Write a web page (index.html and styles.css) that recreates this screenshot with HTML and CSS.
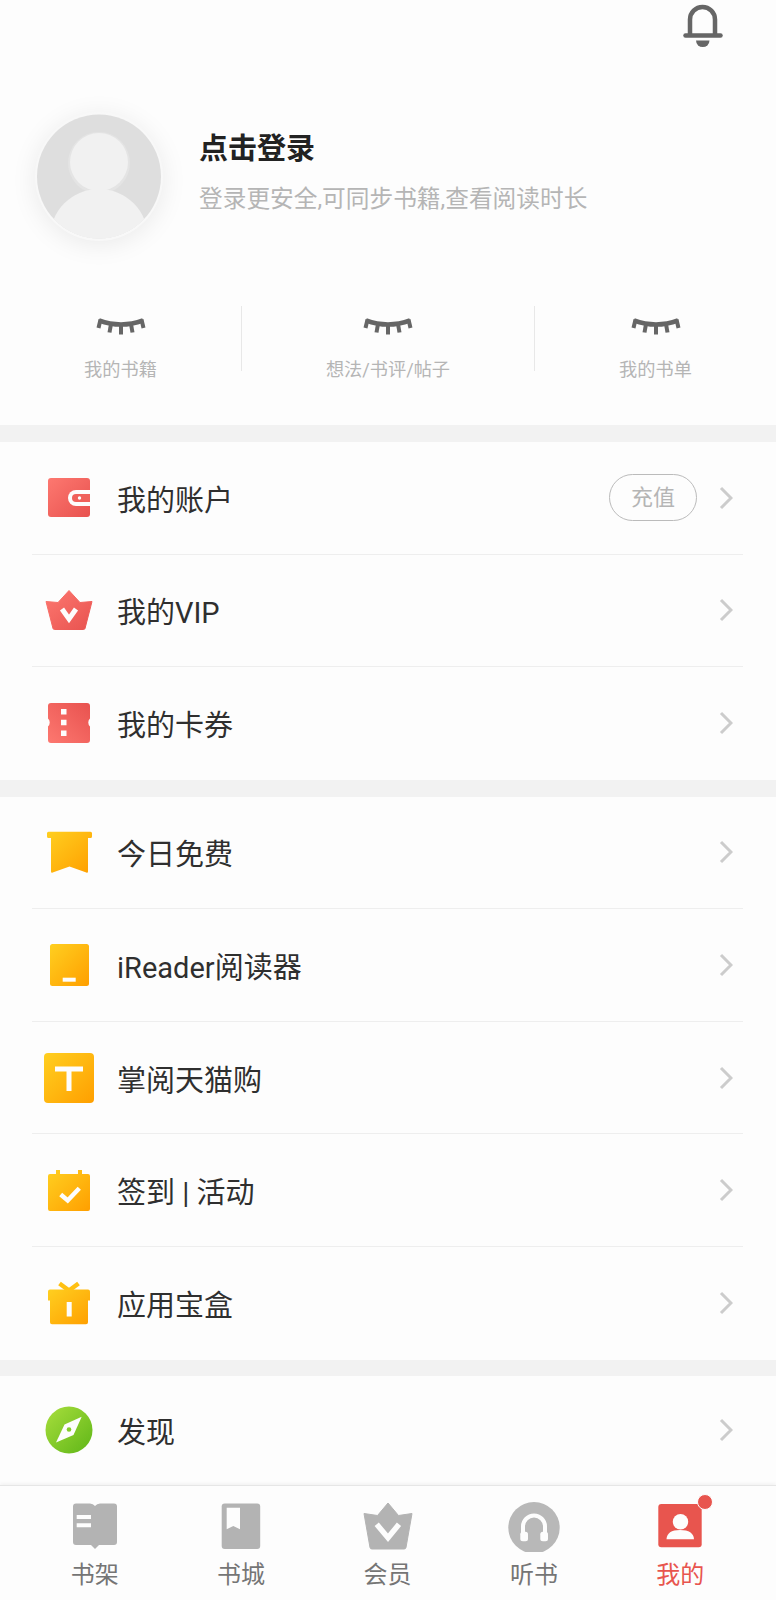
FILE: index.html
```html
<!DOCTYPE html>
<html lang="zh-CN">
<head>
    <meta charset="UTF-8">
    <meta name="viewport" content="width=device-width, initial-scale=1.0">
    <title>我的</title>
    <link rel="stylesheet" href="styles.css">
</head>
<body>
    <div class="page">
        <main class="content">
            <header class="head">
                <div class="topbar">
                    <svg class="bell" width="40" height="44" viewBox="0 0 40 44">
                        <path d="M7 31V15.500a12.500 12.500 0 0 1 25 0V31" fill="none" stroke="#666" stroke-width="4.500"/>
                        <path d="M2.500 31.500H37.500" stroke="#666" stroke-width="4.500" stroke-linecap="round"/>
                        <path d="M13 36.500H26.500a6.700 6.500 0 0 1-13.500 0z" fill="#666"/>
                    </svg>
                </div>
                <div class="profile">
                    <div class="avatar">
                        <svg width="124" height="125" viewBox="0 0 124 125">
                            <defs><clipPath id="avatarClip"><circle cx="62" cy="62.500" r="62"/></clipPath></defs>
                            <g clip-path="url(#avatarClip)">
                                <rect width="124" height="125" fill="#dedede"/>
                                <circle cx="62" cy="49" r="31" fill="#e4e4e4"/>
                                <circle cx="62" cy="48" r="29" fill="#f1f1f1"/>
                                <circle cx="62" cy="124" r="49" fill="#f1f1f1"/>
                                <rect x="0" y="105" width="124" height="20" fill="#f1f1f1"/>
                            </g>
                        </svg>
                    </div>
                    <div class="profile-text">
                        <div class="login">点击登录</div>
                        <div class="login-sub">登录更安全,可同步书籍,查看阅读时长</div>
                    </div>
                </div>
                <div class="stats">
                    <div class="stat">
                        <svg class="eye" width="50" height="18" viewBox="0 0 50 18"><use href="#lashes"/></svg>
                        <div class="stat-label">我的书籍</div>
                    </div>
                    <div class="stat stat-mid">
                        <svg class="eye" width="50" height="18" viewBox="0 0 50 18">
                            <g id="lashes" fill="none" stroke="#666" stroke-width="4">
                                <path d="M3 3.500Q25 11.500 47 3.500" stroke-width="4.600"/>
                                <path d="M4.500 2.500L2.500 11"/>
                                <path d="M15 7L13.500 15.500"/>
                                <path d="M25 8.500V17.500"/>
                                <path d="M35 7L36.500 15.500"/>
                                <path d="M45.500 2.500L47.500 11"/>
                            </g>
                        </svg>
                        <div class="stat-label">想法/书评/帖子</div>
                    </div>
                    <div class="stat">
                        <svg class="eye" width="50" height="18" viewBox="0 0 50 18"><use href="#lashes"/></svg>
                        <div class="stat-label">我的书单</div>
                    </div>
                </div>
            </header>

            <section class="group">
                <div class="row">
                    <svg class="row-icon" width="50" height="50" viewBox="0 0 50 50">
                        <defs>
                            <linearGradient id="red" x1="0" y1="0" x2="1" y2="1"><stop offset="0" stop-color="#fd7870"/><stop offset="1" stop-color="#e8524f"/></linearGradient>
                            <linearGradient id="redUp" x1="0" y1="1" x2="1" y2="0"><stop offset="0" stop-color="#fd7870"/><stop offset="1" stop-color="#e8524f"/></linearGradient>
                            <linearGradient id="orange" x1="0" y1="0" x2="1" y2="1"><stop offset="0" stop-color="#ffcf20"/><stop offset="1" stop-color="#ff9f00"/></linearGradient>
                            <linearGradient id="green" x1="0" y1="0" x2="1" y2="1"><stop offset="0" stop-color="#a8de3c"/><stop offset="1" stop-color="#5fb618"/></linearGradient>
                        </defs>
                        <rect x="4" y="5" width="42" height="39" rx="3" fill="url(#red)"/>
                        <path d="M46 17H32a8 8 0 0 0 0 16H46z" fill="#fdfdfd"/>
                        <path d="M46 21H32a4 4 0 0 0 0 8H46z" fill="#f0625c"/>
                        <circle cx="35.500" cy="25" r="1.700" fill="#fdfdfd"/>
                    </svg>
                    <span class="row-label">我的账户</span>
                    <span class="pill">充值</span>
                    <svg class="chevron" width="14" height="24" viewBox="0 0 14 24"><path d="M2 2L12 12L2 22"/></svg>
                </div>
                <div class="row">
                    <svg class="row-icon" width="50" height="50" viewBox="0 0 50 50">
                        <path d="M2 16.500L14 17.500L25 5.500L36 17.500L48 16.500L41 43.500Q40.600 44.500 39.500 44.500H10.500Q9.400 44.500 9 43.500z" fill="url(#red)" stroke="url(#red)" stroke-width="1" stroke-linejoin="round"/>
                        <path d="M18 24L25 34L32 24" fill="none" stroke="#fdfdfd" stroke-width="5"/>
                    </svg>
                    <span class="row-label">我的VIP</span>
                    <svg class="chevron" width="14" height="24" viewBox="0 0 14 24"><path d="M2 2L12 12L2 22"/></svg>
                </div>
                <div class="row">
                    <svg class="row-icon" width="50" height="50" viewBox="0 0 50 50">
                        <path d="M7 5H43a3 3 0 0 1 3 3V20.500a5.500 5.500 0 0 0 0 8V42a3 3 0 0 1-3 3H7a3 3 0 0 1-3-3V28.500a5.500 5.500 0 0 0 0-8V8a3 3 0 0 1 3-3z" fill="url(#redUp)"/>
                        <path d="M17 11h5.500v5.500H17zM17 21.700h5.500v5.500H17zM17 32.500h5.500V38H17z" fill="#fdfdfd"/>
                    </svg>
                    <span class="row-label">我的卡券</span>
                    <svg class="chevron" width="14" height="24" viewBox="0 0 14 24"><path d="M2 2L12 12L2 22"/></svg>
                </div>
            </section>

            <section class="group">
                <div class="row">
                    <svg class="row-icon" width="50" height="50" viewBox="0 0 50 50">
                        <path d="M4.500 4.700H46.500a1.500 1.500 0 0 1 1.500 1.500V9.500a1.500 1.500 0 0 1-1.500 1.500H44V44.500a1.200 1.200 0 0 1-1.700 1L25.500 39.500L8.700 45.500a1.200 1.200 0 0 1-1.700-1V11H4.500A1.500 1.500 0 0 1 3 9.500V6.200a1.500 1.500 0 0 1 1.500-1.500z" fill="url(#orange)"/>
                    </svg>
                    <span class="row-label">今日免费</span>
                    <svg class="chevron" width="14" height="24" viewBox="0 0 14 24"><path d="M2 2L12 12L2 22"/></svg>
                </div>
                <div class="row">
                    <svg class="row-icon" width="50" height="50" viewBox="0 0 50 50">
                        <rect x="6" y="4" width="39" height="42" rx="2.500" fill="url(#orange)"/>
                        <rect x="18.700" y="37.700" width="13" height="4" fill="#fdfdfd"/>
                    </svg>
                    <span class="row-label">iReader阅读器</span>
                    <svg class="chevron" width="14" height="24" viewBox="0 0 14 24"><path d="M2 2L12 12L2 22"/></svg>
                </div>
                <div class="row">
                    <svg class="row-icon" width="50" height="50" viewBox="0 0 50 50">
                        <rect x="0" y="0" width="50" height="50" rx="4" fill="url(#orange)"/>
                        <path d="M11 13.500H39V18.500H27.500V38H22.500V18.500H11z" fill="#fdfdfd"/>
                    </svg>
                    <span class="row-label">掌阅天猫购</span>
                    <svg class="chevron" width="14" height="24" viewBox="0 0 14 24"><path d="M2 2L12 12L2 22"/></svg>
                </div>
                <div class="row">
                    <svg class="row-icon" width="50" height="50" viewBox="0 0 50 50">
                        <path d="M12 5h4v4h18V5h4v4h6a2 2 0 0 1 2 2V44a2 2 0 0 1-2 2H6a2 2 0 0 1-2-2V11a2 2 0 0 1 2-2h6z" fill="url(#orange)"/>
                        <path d="M16.700 29.500L23.700 35.500L35.300 23.300" fill="none" stroke="#fdfdfd" stroke-width="4.500"/>
                    </svg>
                    <span class="row-label">签到 | 活动</span>
                    <svg class="chevron" width="14" height="24" viewBox="0 0 14 24"><path d="M2 2L12 12L2 22"/></svg>
                </div>
                <div class="row">
                    <svg class="row-icon" width="50" height="50" viewBox="0 0 50 50">
                        <path d="M15.500 5.500L25 12.500L34.500 5.500" fill="none" stroke="#ffc012" stroke-width="4.500"/>
                        <path d="M6 11.500H44a2 2 0 0 1 2 2V22.500H44V44.300a2 2 0 0 1-2 2H8a2 2 0 0 1-2-2V22.500H4V13.500a2 2 0 0 1 2-2z" fill="url(#orange)"/>
                        <rect x="22.700" y="24" width="5" height="14.500" fill="#fdfdfd"/>
                    </svg>
                    <span class="row-label">应用宝盒</span>
                    <svg class="chevron" width="14" height="24" viewBox="0 0 14 24"><path d="M2 2L12 12L2 22"/></svg>
                </div>
            </section>

            <section class="group">
                <div class="row row-short">
                    <svg class="row-icon" width="50" height="50" viewBox="0 0 50 50">
                        <circle cx="25" cy="25" r="23.500" fill="url(#green)"/>
                        <path d="M37.700 11.700L29.500 30L12 37.500L20.500 19.500z" fill="#fdfdfd"/>
                        <circle cx="25" cy="24.500" r="2.300" fill="#84cb2a"/>
                    </svg>
                    <span class="row-label">发现</span>
                    <svg class="chevron" width="14" height="24" viewBox="0 0 14 24"><path d="M2 2L12 12L2 22"/></svg>
                </div>
            </section>
        </main>

        <nav class="tabbar">
            <div class="tab">
                <div class="tab-icon">
                    <svg width="52" height="52" viewBox="0 0 52 52">
                        <path d="M7 3.500H21Q24 3.500 26 6Q28 3.500 31 3.500H45a3 3 0 0 1 3 3V42a3 3 0 0 1-3 3H30L26 49L22 45H7a3 3 0 0 1-3-3V6.500a3 3 0 0 1 3-3z" fill="#b3b3b3"/>
                        <path d="M7.700 15H22V19H7.700zM7.700 23.300H22V27.300H7.700z" fill="#fdfdfd"/>
                    </svg>
                </div>
                <span class="tab-label">书架</span>
            </div>
            <div class="tab">
                <div class="tab-icon">
                    <svg width="52" height="52" viewBox="0 0 52 52">
                        <rect x="6.700" y="3.500" width="38.500" height="45.500" rx="3" fill="#b3b3b3"/>
                        <path d="M11.700 7.700H25V29.300L18.300 26L11.700 29.300z" fill="#fdfdfd"/>
                    </svg>
                </div>
                <span class="tab-label">书城</span>
            </div>
            <div class="tab">
                <div class="tab-icon">
                    <svg width="52" height="52" viewBox="0 0 52 52">
                        <path d="M2 13.500L15.500 15.500L26 3L36.500 15.500L50 13.500L44 47.500Q43.700 49 42 49H10Q8.300 49 8 47.500z" fill="#b3b3b3" stroke="#b3b3b3" stroke-width="1" stroke-linejoin="round"/>
                        <path d="M14.700 24.300L26 37.700L37 24.300" fill="none" stroke="#fdfdfd" stroke-width="5.500"/>
                    </svg>
                </div>
                <span class="tab-label">会员</span>
            </div>
            <div class="tab">
                <div class="tab-icon">
                    <svg width="52" height="52" viewBox="0 0 52 52">
                        <circle cx="26" cy="27.700" r="25.700" fill="#b8b8b8"/>
                        <path d="M15 33V26.500a11 11 0 0 1 22 0V33" fill="none" stroke="#fdfdfd" stroke-width="4"/>
                        <rect x="12.300" y="31.700" width="7.700" height="9.500" rx="2.500" fill="#fdfdfd"/>
                        <rect x="32.300" y="31.700" width="7.700" height="9.500" rx="2.500" fill="#fdfdfd"/>
                    </svg>
                </div>
                <span class="tab-label">听书</span>
            </div>
            <div class="tab tab-active">
                <div class="tab-icon">
                    <svg width="52" height="52" viewBox="0 0 52 52">
                        <rect x="4.300" y="4" width="43.400" height="43.300" rx="3" fill="#e8554e"/>
                        <circle cx="26.500" cy="21.700" r="7.700" fill="#fdfdfd"/>
                        <path d="M12.500 39.300Q13 30 26 30Q39.500 30 40 39.300z" fill="#fdfdfd"/>
                    </svg>
                    <span class="badge"></span>
                </div>
                <span class="tab-label">我的</span>
            </div>
        </nav>
    </div>
</body>
</html>
```

FILE: styles.css
```css
* {
    box-sizing: border-box;
}
body {
    margin: 0;
    font-family: Roboto, "Noto Sans CJK SC", sans-serif;
    background: #fdfdfd;
}
svg {
    display: block;
    flex: none;
}
.page {
    display: flex;
    flex-direction: column;
    width: 776px;
    height: 1600px;
    overflow: hidden;
}
.content {
    flex: 1;
    min-height: 0;
    overflow: hidden;
    background: #f2f2f2;
}
.head {
    height: 425px;
    margin-bottom: 17px;
    background: #fdfdfd;
}
.topbar {
    display: flex;
    justify-content: flex-end;
    height: 47px;
    padding: 4px 53px 0 0;
}
.profile {
    display: flex;
    margin-top: 65px;
    padding-left: 35px;
}
.avatar {
    width: 128px;
    height: 129px;
    padding: 2px;
    border-radius: 50%;
    background: #f8f8f8;
    box-shadow: 0 4px 26px rgba(0,0,0,0.08);
}
.profile-text {
    margin: 19px 0 0 36px;
}
.login {
    font-size: 29px;
    line-height: 36px;
    font-weight: bold;
    color: #222;
}
.login-sub {
    margin-top: 15px;
    font-size: 23.7px;
    line-height: 34px;
    color: #b5b5b5;
}
.stats {
    display: grid;
    grid-template-columns: 241px 294px 241px;
    grid-template-rows: 65px;
    margin-top: 65px;
}
.stat {
    display: flex;
    flex-direction: column;
    align-items: center;
    padding-top: 11px;
}
.stat-mid {
    border-left: 1px solid #e8e8e8;
    border-right: 1px solid #e8e8e8;
}
.stat-label {
    margin-top: 23px;
    font-size: 18.2px;
    line-height: 24px;
    white-space: nowrap;
    color: #b5b5b5;
}
.group {
    margin-bottom: 16.8px;
    padding: 0 33px 0 32px;
    background: #fdfdfd;
}
.row {
    display: flex;
    align-items: center;
    height: 112.6px;
    padding: 0 10px 0 12px;
    border-bottom: 1px solid #eee;
}
.row:last-child {
    border-bottom: none;
}
.row-short {
    height: 110px;
    padding-bottom: 3px;
}
.row-label {
    flex: 1;
    margin-left: 23px;
    font-size: 29px;
    color: #2f2f2f;
}
.pill {
    width: 88px;
    height: 47px;
    margin-right: 22px;
    border: 1px solid #bbb;
    border-radius: 24px;
    font-size: 22px;
    line-height: 45px;
    text-align: center;
    color: #b5b5b5;
}
.chevron path {
    fill: none;
    stroke: #ccc;
    stroke-width: 3;
}
.tabbar {
    position: relative;
    display: flex;
    height: 115px;
    padding: 14px 22.5px 0 21.5px;
    border-top: 1px solid #e6e6e6;
    background: #fdfdfd;
    box-shadow: 0 -2px 3px rgba(0,0,0,0.04);
}
.tab {
    flex: 1;
    display: flex;
    flex-direction: column;
    align-items: center;
}
.tab-icon {
    position: relative;
    width: 52px;
    height: 52px;
}
.tab-label {
    margin-top: 8px;
    font-size: 24px;
    line-height: 30px;
    color: #757575;
}
.tab-active .tab-label {
    color: #e8554e;
}
.badge {
    position: absolute;
    top: -6px;
    left: 43px;
    width: 16px;
    height: 16px;
    border: 1px solid #fdfdfd;
    border-radius: 50%;
    background: #e8554e;
}
```
